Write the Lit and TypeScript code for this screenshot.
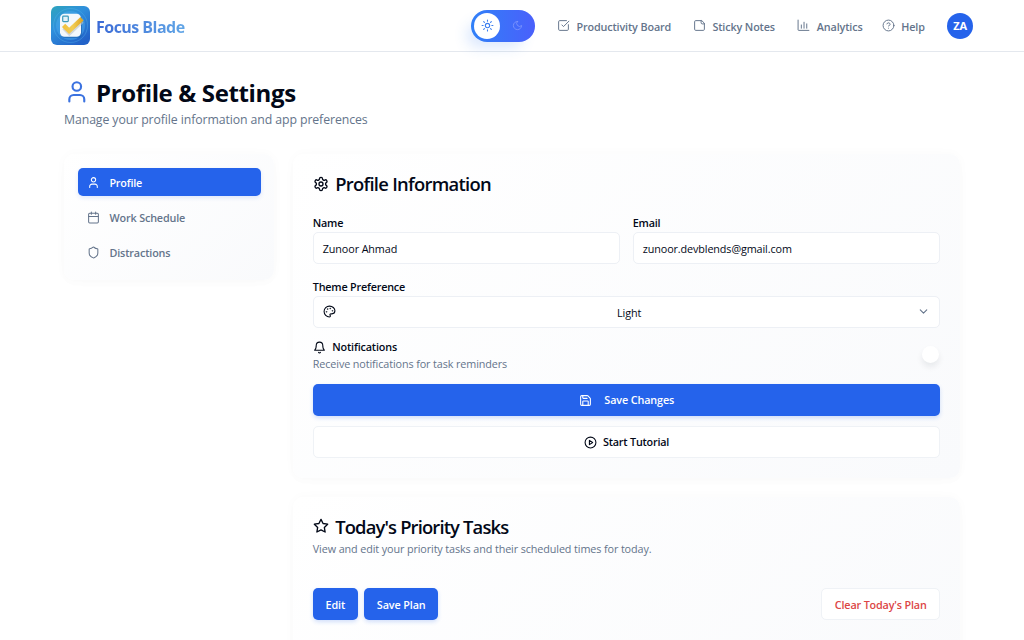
import { LitElement, html, css, svg } from "lit";
import { customElement, property } from "lit/decorators.js";

const icons: Record<string, unknown> = {
  sun: svg`<circle cx="12" cy="12" r="4"/><path d="M12 2v2M12 20v2M4.93 4.93l1.41 1.41M17.66 17.66l1.41 1.41M2 12h2M20 12h2M6.34 17.66l-1.41 1.41M19.07 4.93l-1.41 1.41"/>`,
  moon: svg`<path d="M12 3a6 6 0 0 0 9 9 9 9 0 1 1-9-9Z"/>`,
  board: svg`<path d="M21 10.5V19a2 2 0 0 1-2 2H5a2 2 0 0 1-2-2V5a2 2 0 0 1 2-2h12.5"/><path d="m9 11 3 3L22 4"/>`,
  note: svg`<path d="M15.5 3H5a2 2 0 0 0-2 2v14a2 2 0 0 0 2 2h14a2 2 0 0 0 2-2V8.5Z"/><path d="M15 3v4a2 2 0 0 0 2 2h4"/>`,
  chart: svg`<path d="M2 2v18a1 1 0 0 0 1 1h19"/><path d="M8 17v-6M13 17V6M18 17v-8"/>`,
  help: svg`<circle cx="12" cy="12" r="10"/><path d="M9.09 9a3 3 0 0 1 5.83 1c0 2-3 3-3 3M12 17h.01"/>`,
  user: svg`<path d="M19 21v-2a4 4 0 0 0-4-4H9a4 4 0 0 0-4 4v2"/><circle cx="12" cy="7" r="4"/>`,
  calendar: svg`<path d="M8 2v4M16 2v4M3 10h18"/><rect x="3" y="4" width="18" height="18" rx="2"/>`,
  shield: svg`<path d="M20 13c0 5-3.5 7.5-7.66 8.95a1 1 0 0 1-.67-.01C7.5 20.5 4 18 4 13V6a1 1 0 0 1 1-1c2 0 4.5-1.2 6.24-2.72a1.17 1.17 0 0 1 1.52 0C14.51 3.81 17 5 19 5a1 1 0 0 1 1 1z"/>`,
  gear: svg`<path d="M12.22 2h-.44a2 2 0 0 0-2 2v.18a2 2 0 0 1-1 1.73l-.43.25a2 2 0 0 1-2 0l-.15-.08a2 2 0 0 0-2.73.73l-.22.38a2 2 0 0 0 .73 2.73l.15.1a2 2 0 0 1 1 1.72v.51a2 2 0 0 1-1 1.74l-.15.09a2 2 0 0 0-.73 2.73l.22.38a2 2 0 0 0 2.73.73l.15-.08a2 2 0 0 1 2 0l.43.25a2 2 0 0 1 1 1.73V20a2 2 0 0 0 2 2h.44a2 2 0 0 0 2-2v-.18a2 2 0 0 1 1-1.73l.43-.25a2 2 0 0 1 2 0l.15.08a2 2 0 0 0 2.73-.73l.22-.39a2 2 0 0 0-.73-2.73l-.15-.08a2 2 0 0 1-1-1.74v-.5a2 2 0 0 1 1-1.74l.15-.09a2 2 0 0 0 .73-2.73l-.22-.38a2 2 0 0 0-2.73-.73l-.15.08a2 2 0 0 1-2 0l-.43-.25a2 2 0 0 1-1-1.73V4a2 2 0 0 0-2-2z"/><circle cx="12" cy="12" r="3"/>`,
  palette: svg`<circle cx="13.5" cy="6.5" r=".5"/><circle cx="17.5" cy="10.5" r=".5"/><circle cx="8.5" cy="7.5" r=".5"/><circle cx="6.5" cy="12.5" r=".5"/><path d="M12 2C6.5 2 2 6.5 2 12s4.5 10 10 10c.926 0 1.648-.746 1.648-1.688 0-.437-.18-.835-.437-1.125-.29-.289-.438-.652-.438-1.125a1.64 1.64 0 0 1 1.668-1.668h1.996c3.051 0 5.555-2.503 5.555-5.554C21.965 6.012 17.461 2 12 2z"/>`,
  bell: svg`<path d="M6 8a6 6 0 0 1 12 0c0 7 3 9 3 9H3s3-2 3-9M10.3 21a1.94 1.94 0 0 0 3.4 0"/>`,
  save: svg`<path d="M15.2 3a2 2 0 0 1 1.4.6l3.8 3.8a2 2 0 0 1 .6 1.4V19a2 2 0 0 1-2 2H5a2 2 0 0 1-2-2V5a2 2 0 0 1 2-2z"/><path d="M17 21v-7a1 1 0 0 0-1-1H8a1 1 0 0 0-1 1v7M7 3v4a1 1 0 0 0 1 1h7"/>`,
  play: svg`<circle cx="12" cy="12" r="10"/><path d="m10 8 6 4-6 4z"/>`,
  star: svg`<path d="m12 2 3.09 6.26L22 9.27l-5 4.87 1.18 6.88L12 17.77l-6.18 3.25L7 14.14 2 9.27l6.91-1.01z"/>`,
  down: svg`<path d="m6 9 6 6 6-6"/>`,
};

@customElement("ui-icon")
class UiIcon extends LitElement {
  @property() name = "";
  static styles = css`
    :host { display: block; flex: none; width: 13px; height: 13px; }
    svg { display: block; width: 100%; height: 100%; fill: none; stroke: currentColor; stroke-width: var(--stroke, 2); stroke-linecap: round; stroke-linejoin: round; }
  `;
  render() {
    return html`<svg viewBox="0 0 24 24">${icons[this.name]}</svg>`;
  }
}

@customElement("app-logo")
class AppLogo extends LitElement {
  static styles = css`
    :host { display: block; flex: none; width: 39px; height: 39px; }
    svg { display: block; width: 100%; height: 100%; }
  `;
  render() {
    return html`<svg viewBox="0 0 39 39">
      <defs>
        <linearGradient id="bg" x1="0" y1="0" x2="0.7" y2="1"><stop offset="0" stop-color="#2fa5bd"/><stop offset=".45" stop-color="#2f8fdc"/><stop offset="1" stop-color="#2262c8"/></linearGradient>
        <linearGradient id="tick" x1="0" y1="0" x2="1" y2="0"><stop offset="0" stop-color="#f2c240"/><stop offset=".5" stop-color="#f1cc55"/><stop offset="1" stop-color="#dfa826"/></linearGradient>
      </defs>
      <rect width="39" height="39" rx="6" fill="url(#bg)"/>
      <circle cx="19.5" cy="19.5" r="17" fill="none" stroke="#58b9ee" stroke-opacity=".35"/>
      <circle cx="19.5" cy="19.5" r="14.5" fill="#49a9ee" fill-opacity=".5"/>
      <rect x="9.5" y="9" width="21.5" height="23" rx="4.5" fill="#1a5da8" opacity=".55"/>
      <rect x="9" y="7.8" width="21" height="23" rx="4.5" fill="#f4f8fc"/>
      <rect x="11.7" y="10.2" width="5.6" height="5.4" rx=".8" fill="#e3f1f8" stroke="#3d9abb" stroke-width="1.2"/>
      <path d="M13 21.7l5.3 5.3L31 15" fill="none" stroke="#b9c2c9" stroke-opacity=".6" stroke-width="4.6"/>
      <path d="M12.6 19.4l5.5 5.5L31 12.8" fill="none" stroke="url(#tick)" stroke-width="4.6"/>
    </svg>`;
  }
}

@customElement("app-root")
class AppRoot extends LitElement {
  static styles = css`
    :host { display: block; width: 1024px; height: 640px; overflow: hidden; background: #fff; color: #020817; font-family: "Open Sans", "Noto Sans", sans-serif; font-size: 10.8px; letter-spacing: -.11px; line-height: 16px; white-space: nowrap; }
    * { box-sizing: border-box; }
    header { display: flex; align-items: center; height: 52px; padding: 0 51px; border-bottom: 1px solid #e4e8ee; }
    .brand { display: flex; align-items: center; gap: 6px; width: 420px; }
    .brand span { font-size: 16px; font-weight: 700; line-height: 24px; letter-spacing: -.53px; padding-top: 3px; background: linear-gradient(90deg, #3b6ad6, #60a5e6); background-clip: text; -webkit-background-clip: text; color: transparent; }
    .toggle { flex: none; display: flex; align-items: center; width: 64px; height: 32px; padding: 3px; border-radius: 16px; background: linear-gradient(90deg, #3080f8, #4a60fb); box-shadow: -8px 9px 14px -4px #3b82f630; color: #7f96fc; }
    .knob { display: grid; place-items: center; width: 26px; height: 26px; border-radius: 50%; background: #fff; color: #3b7ef0; }
    .moon { width: 11px; height: 11px; margin-left: 12px; --stroke: 1.8; }
    .links { display: flex; flex: 1; margin-left: 22px; color: #64748b; font-weight: 600; letter-spacing: -.13px; }
    .link { display: flex; align-items: center; gap: 6.4px; height: 20px; --stroke: 1.8; }
    .link span { padding-top: 2px; }
    .link ui-icon { margin-top: -1px; }
    .l1 { width: 136px; } .l2 { width: 104.4px; } .l3 { width: 84.4px; }
    .avatar { flex: none; display: grid; place-items: center; width: 26px; height: 26px; border-radius: 50%; background: #2563eb; color: #fff; font-weight: 700; font-size: 11px; padding-top: 1px; }
    main { padding: 28px 64px 0; }
    .title { display: flex; align-items: center; gap: 6.4px; height: 28px; }
    .title ui-icon { width: 25.6px; height: 25.6px; color: #3b72e0; margin-top: -4px; }
    h1, h2 { margin: 0; }
    h1 { font-size: 24px; line-height: 28px; font-weight: 700; letter-spacing: -.36px; margin-top: -2px; }
    .sub { margin-top: 3px; height: 18px; font-size: 12.3px; letter-spacing: -.1px; line-height: 18px; color: #64748b; }
    .columns { display: grid; grid-template-columns: 209.6px 667.2px; gap: 19.2px; align-items: start; margin-top: 25.4px; }
    .card { border-radius: 10px; background: linear-gradient(135deg, #fff, #f9fafc); box-shadow: 0 0 12px rgba(15, 23, 42, .024), 0 4px 12px rgba(15, 23, 42, .01); }
    .side { display: flex; flex-direction: column; gap: 6.4px; padding: 13.3px 13px 13.3px 13.5px; }
    .tab { display: flex; align-items: center; gap: 9.6px; height: 28.8px; padding-left: 9.3px; border-radius: 5px; color: #64748b; font-weight: 600; letter-spacing: -.14px; --stroke: 1.9; }
    .tab span { padding-top: 1px; }
    .active { background: #2563eb; color: #fff; box-shadow: 0 2px 4px #2563eb22; letter-spacing: -.2px; }
    .active span { padding-top: 2px; }
    .stack { display: flex; flex-direction: column; gap: 19px; }
    .panel { padding: 19.6px 20px; }
    .profile { height: 323.6px; }
    .tasks { height: 200px; }
    .head { display: flex; align-items: center; gap: 6.4px; height: 22px; }
    .head ui-icon { width: 16px; height: 16px; margin-top: -1px; }
    h2 { font-size: 18.4px; line-height: 22px; font-weight: 600; letter-spacing: -.72px; margin-top: -1px; }
    .tasks h2 { letter-spacing: -.85px; }
    .tasks .head ui-icon { margin-top: -3px; }
    .row { display: flex; gap: 12.8px; }
    .field { flex: 1; }
    .label { height: 16px; line-height: 14px; font-weight: 600; letter-spacing: -.2px; }
    .input { display: flex; align-items: center; height: 32px; padding: 2px 9.5px 0 9px; border: 1px solid #edf0f5; border-radius: 5px; background: #fff; }
    .select { padding: 0 9px 0 9.5px; }
    .select span { flex: 1; text-align: center; padding: 2px 0 0 5px; }
    .chev { color: #64748b; }
    .notify { display: flex; justify-content: space-between; margin-top: 10.5px; height: 46px; }
    .nlabel { display: flex; align-items: center; gap: 6.4px; height: 18px; font-weight: 600; letter-spacing: -.15px; }
    .muted { color: #64748b; }
    .desc { margin-top: 2px; }
    .switch { width: 17px; height: 17px; margin: 7.7px 1.2px 0 0; border-radius: 50%; background: #fff; box-shadow: 0 4px 6px rgba(15, 23, 42, .08); }
    .btn { display: flex; align-items: center; justify-content: center; height: 32px; border-radius: 5px; font-weight: 600; letter-spacing: -.12px; }
    .primary { background: #2563eb; color: #fff; box-shadow: 0 2px 4px #2563eb33; }
    .outline { background: #fff; border: 1px solid #eff2f6; }
    .tutorial { letter-spacing: -.2px; }
    .small { padding-top: 2px; }
    .danger { color: #dc4545; width: 118.5px; margin-left: auto; letter-spacing: -.16px; }
  `;

  link(cls: string, icon: string, text: string) {
    return html`<div class="link ${cls}"><ui-icon name=${icon}></ui-icon><span>${text}</span></div>`;
  }
  tab(icon: string, text: string, active = false) {
    return html`<div class="tab ${active ? "active" : ""}"><ui-icon name=${icon}></ui-icon><span>${text}</span></div>`;
  }

  render() {
    return html`
      <header>
        <div class="brand"><app-logo></app-logo><span>Focus Blade</span></div>
        <div class="toggle"><div class="knob"><ui-icon name="sun"></ui-icon></div><ui-icon class="moon" name="moon"></ui-icon></div>
        <nav class="links">
          ${this.link("l1", "board", "Productivity Board")}
          ${this.link("l2", "note", "Sticky Notes")}
          ${this.link("l3", "chart", "Analytics")}
          ${this.link("l4", "help", "Help")}
        </nav>
        <div class="avatar">ZA</div>
      </header>
      <main>
        <div class="title"><ui-icon name="user"></ui-icon><h1>Profile &amp; Settings</h1></div>
        <div class="sub">Manage your profile information and app preferences</div>
        <div class="columns">
          <nav class="card side">
            ${this.tab("user", "Profile", true)}
            ${this.tab("calendar", "Work Schedule")}
            ${this.tab("shield", "Distractions")}
          </nav>
          <div class="stack">
            <section class="card panel profile">
              <div class="head"><ui-icon name="gear"></ui-icon><h2>Profile Information</h2></div>
              <div class="row" style="margin-top:20px">
                <div class="field"><div class="label">Name</div><div class="input">Zunoor Ahmad</div></div>
                <div class="field"><div class="label">Email</div><div class="input">zunoor.devblends@gmail.com</div></div>
              </div>
              <div class="label" style="margin-top:16px">Theme Preference</div>
              <div class="input select"><ui-icon name="palette"></ui-icon><span>Light</span><ui-icon class="chev" name="down"></ui-icon></div>
              <div class="notify">
                <div>
                  <div class="nlabel"><ui-icon name="bell"></ui-icon>Notifications</div>
                  <div class="muted">Receive notifications for task reminders</div>
                </div>
                <div class="switch"></div>
              </div>
              <div class="btn primary" style="gap:12.8px"><ui-icon name="save"></ui-icon>Save Changes</div>
              <div class="btn outline tutorial" style="gap:6.4px;margin-top:9.6px"><ui-icon name="play"></ui-icon>Start Tutorial</div>
            </section>
            <section class="card panel tasks">
              <div class="head"><ui-icon name="star"></ui-icon><h2>Today's Priority Tasks</h2></div>
              <div class="muted desc">View and edit your priority tasks and their scheduled times for today.</div>
              <div class="row" style="gap:6.4px;margin-top:31px">
                <div class="btn primary small" style="width:45px">Edit</div>
                <div class="btn primary small" style="width:74px">Save Plan</div>
                <div class="btn outline danger small">Clear Today's Plan</div>
              </div>
            </section>
          </div>
        </div>
      </main>`;
  }
}
